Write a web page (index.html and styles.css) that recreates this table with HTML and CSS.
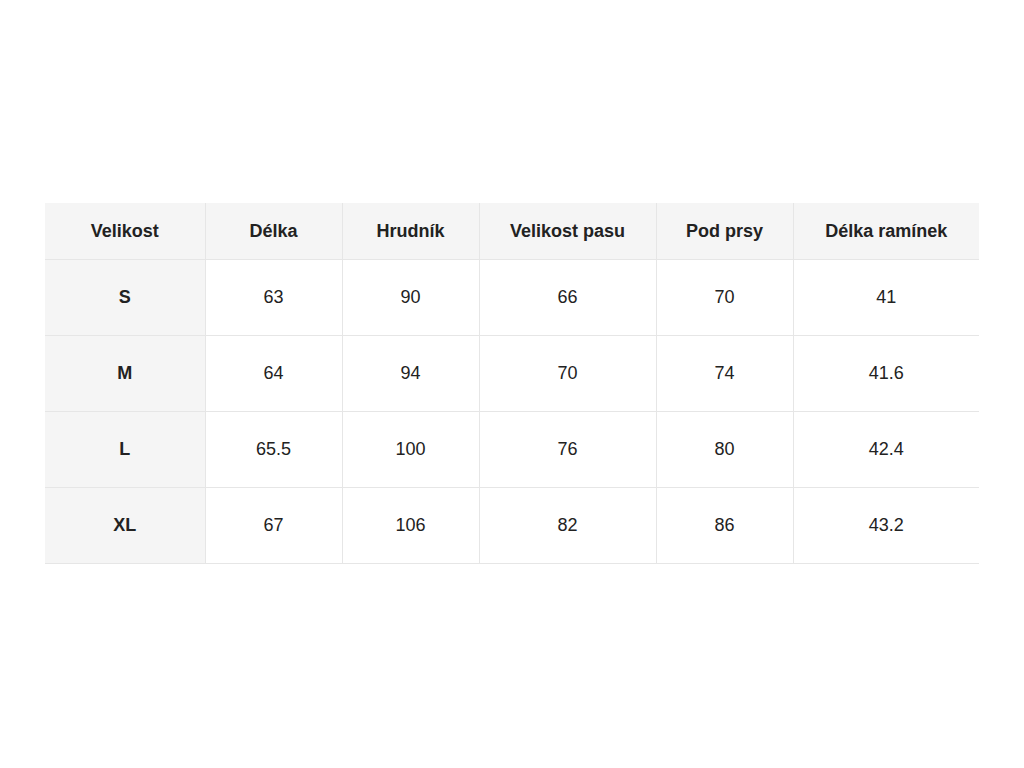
FILE: index.html
```html
<!DOCTYPE html>
<html lang="cs">
<head>
<meta charset="utf-8">
<title>Tabulka velikostí</title>
<link rel="stylesheet" href="styles.css">
</head>
<body>
<main class="page">
<table class="sizes">
<colgroup>
<col class="c1"><col class="c2"><col class="c3"><col class="c4"><col class="c5"><col class="c6">
</colgroup>
<thead>
<tr><th>Velikost</th><th>Délka</th><th>Hrudník</th><th>Velikost pasu</th><th>Pod prsy</th><th>Délka ramínek</th></tr>
</thead>
<tbody>
<tr><th>S</th><td>63</td><td>90</td><td>66</td><td>70</td><td>41</td></tr>
<tr><th>M</th><td>64</td><td>94</td><td>70</td><td>74</td><td>41.6</td></tr>
<tr><th>L</th><td>65.5</td><td>100</td><td>76</td><td>80</td><td>42.4</td></tr>
<tr><th>XL</th><td>67</td><td>106</td><td>82</td><td>86</td><td>43.2</td></tr>
</tbody>
</table>
</main>
</body>
</html>
```
FILE: styles.css
```css
html, body {
  margin: 0;
  padding: 0;
  background: #fff;
}
.page {
  min-height: 768px;
  display: flex;
  align-items: flex-start;
  justify-content: center;
  padding-top: 203px;
  box-sizing: border-box;
  font-family: "Liberation Sans", Arial, sans-serif;
  color: #222;
}
.sizes {
  width: 934px;
  border-collapse: collapse;
  table-layout: fixed;
  font-size: 18px;
}
.c1 { width: 160px; }
.c2 { width: 137px; }
.c3 { width: 137px; }
.c4 { width: 177px; }
.c5 { width: 137px; }
.c6 { width: 186px; }
.sizes th, .sizes td {
  text-align: center;
  padding: 0;
  border-right: 1px solid #e6e6e6;
  border-bottom: 1px solid #e6e6e6;
}
.sizes th:last-child, .sizes td:last-child {
  border-right: none;
}
.sizes thead th {
  height: 56px;
  background: #f5f5f5;
  font-weight: bold;
}
.sizes tbody td, .sizes tbody th {
  height: 75px;
}
.sizes tbody th {
  background: #f5f5f5;
  font-weight: bold;
}
.sizes td {
  font-weight: normal;
}
```
